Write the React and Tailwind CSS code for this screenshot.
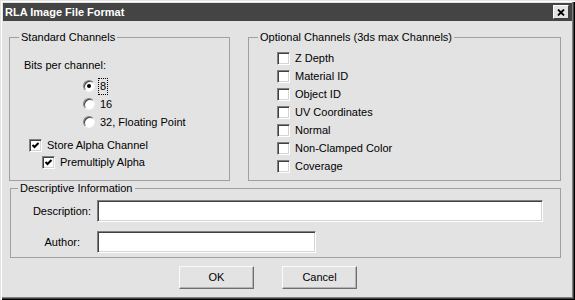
import React from "react";

const sunken =
  "bg-white border border-t-[#808080] border-l-[#808080] border-b-white border-r-white shadow-[inset_1px_1px_0_#404040,inset_-1px_-1px_0_#d4d4d4]";

function CheckBox({ checked }) {
  return (
    <span className={`w-[13px] h-[13px] shrink-0 flex items-center justify-center ${sunken}`}>
      {checked ? (
        <svg width="9" height="9" viewBox="0 0 9 9">
          <path d="M1.5 4 L3.5 6 L7.5 2" stroke="#000" strokeWidth="2" fill="none" />
        </svg>
      ) : null}
    </span>
  );
}

function Radio({ checked, label, focused }) {
  return (
    <div className="h-[18px] flex items-center">
      <span className="w-[12px] h-[12px] rounded-full bg-white border border-t-[#808080] border-l-[#808080] border-b-[#f4f4f4] border-r-[#f4f4f4] shadow-[inset_1px_1px_0_#404040] flex items-center justify-center">
        {checked ? <span className="w-[4px] h-[4px] rounded-full bg-black" /> : null}
      </span>
      <span
        className={`ml-[3px] px-[1px] py-[1px] leading-[13px] border border-dotted ${
          focused ? "border-black" : "border-transparent"
        }`}
      >
        {label}
      </span>
    </div>
  );
}

function CheckRow({ checked, label, indent, h = "h-[18px]" }) {
  return (
    <div className={`${h} flex items-center gap-[5px] ${indent}`}>
      <CheckBox checked={checked} />
      <span className="leading-[13px]">{label}</span>
    </div>
  );
}

function Button({ children }) {
  return (
    <button className="w-[75px] h-[23px] bg-[#e3e3e3] text-black border border-t-[#fafafa] border-l-[#fafafa] border-b-[#6e6e6e] border-r-[#6e6e6e] shadow-[inset_-1px_-1px_0_#b4b4b4]">
      {children}
    </button>
  );
}

export default function App() {
  const optional = [
    "Z Depth",
    "Material ID",
    "Object ID",
    "UV Coordinates",
    "Normal",
    "Non-Clamped Color",
    "Coverage",
  ];

  return (
    <div className="w-[575px] h-[300px] bg-[#e3e3e3] text-black text-[11px] font-['Liberation_Sans',Arial,sans-serif] flex flex-col shadow-[inset_1px_1px_0_#e3e3e3,inset_2px_2px_0_#ffffff,inset_-1px_-1px_0_#000000,inset_-2px_-2px_0_#404040,inset_-3px_-3px_0_#808080]">
      {/* title bar */}
      <div className="mx-[3px] mt-[3px] h-[18px] bg-[#444444] flex items-center justify-between">
        <span className="pl-[2px] text-white font-bold text-[11px]">RLA Image File Format</span>
        <span className="mr-[3px] w-[16px] h-[14px] bg-[#e3e3e3] border border-t-white border-l-white border-b-[#404040] border-r-[#404040] flex items-center justify-center">
          <svg width="8" height="7" viewBox="0 0 8 7">
            <path d="M1 0.5 L7 6.5 M7 0.5 L1 6.5" stroke="#000" strokeWidth="1.8" fill="none" />
          </svg>
        </span>
      </div>

      <div className="px-[9px] flex flex-col">
        <div className="mt-[10px] flex gap-[18px]">
          <fieldset className="w-[221px] h-[150px] border border-[#a0a0a0] p-0 m-0">
            <legend className="ml-[9px] px-[2px] leading-[13px]">Standard Channels</legend>
            <div className="mt-[15px] ml-[14px] leading-[13px]">Bits per channel:</div>
            <div className="mt-[5px] ml-[73px]">
              <Radio checked focused label="8" />
              <Radio label="16" />
              <Radio label="32, Floating Point" />
            </div>
            <div className="mt-[6px]">
              <CheckRow checked label="Store Alpha Channel" indent="ml-[19px]" h="h-[17px]" />
              <CheckRow checked label="Premultiply Alpha" indent="ml-[32px]" h="h-[17px]" />
            </div>
          </fieldset>

          <fieldset className="w-[313px] h-[150px] border border-[#a0a0a0] p-0 m-0">
            <legend className="ml-[9px] px-[2px] leading-[13px]">Optional Channels (3ds max Channels)</legend>
            <div className="mt-[5px] ml-[28px]">
              {optional.map((o) => (
                <CheckRow key={o} label={o} indent="" />
              ))}
            </div>
          </fieldset>
        </div>

        <fieldset className="mt-[1px] ml-[1px] w-[551px] h-[76px] border border-[#a0a0a0] p-0 m-0">
          <legend className="ml-[7px] px-[2px] leading-[13px]">Descriptive Information</legend>
          <div className="mt-[5px] h-[22px] flex items-center">
            <span className="w-[80px] text-right">Description:</span>
            <span className={`ml-[6px] w-[446px] h-[22px] ${sunken}`} />
          </div>
          <div className="mt-[9px] h-[22px] flex items-center">
            <span className="w-[69px] text-right">Author:</span>
            <span className={`ml-[17px] w-[219px] h-[22px] ${sunken}`} />
          </div>
        </fieldset>

        <div className="mt-[8px] ml-[170px] flex gap-[28px]">
          <Button>OK</Button>
          <Button>Cancel</Button>
        </div>
      </div>
    </div>
  );
}
